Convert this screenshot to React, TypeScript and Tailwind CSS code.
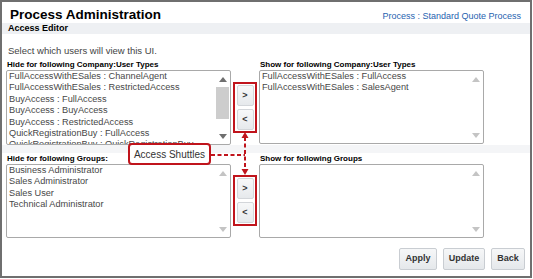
import React from "react";

const RED = "#c0141c";

const upperItems = [
  "FullAccessWithESales : ChannelAgent",
  "FullAccessWithESales : RestrictedAccess",
  "BuyAccess : FullAccess",
  "BuyAccess : BuyAccess",
  "BuyAccess : RestrictedAccess",
  "QuickRegistrationBuy : FullAccess",
  "QuickRegistrationBuy : QuickRegistrationBuy",
];

const groups = [
  "Business Administrator",
  "Sales Administrator",
  "Sales User",
  "Technical Administrator",
];

function Arrow({ down, active }: { down?: boolean; active?: boolean }) {
  return (
    <div className="h-[12px] flex items-center justify-center">
      <svg width="8" height="5" viewBox="0 0 8 5">
        <polygon
          points={down ? "0,0 8,0 4,5" : "0,5 8,5 4,0"}
          fill={active ? "#6f6f6f" : "#c4c4c4"}
        />
      </svg>
    </div>
  );
}

function ListBox({ items, tall, thumb }: { items: string[]; tall: number; thumb?: boolean }) {
  return (
    <div
      className={`w-[225px] border border-[#a9a9a9] rounded-[2px] bg-white flex overflow-hidden ${
        tall === 75 ? "h-[75px]" : "h-[74px]"
      }`}
    >
      <div className="flex-1 overflow-hidden pl-[2px] text-[9.2px] leading-[11.4px] text-[#474747] whitespace-nowrap">
        {items.map((t) => (
          <div key={t}>{t}</div>
        ))}
      </div>
      <div className="w-[15px] flex flex-col py-[2px]">
        <Arrow active={thumb} />
        <div className="flex-1 flex flex-col">
          {thumb && <div className="mt-[2px] h-[32px] mx-[1px] bg-[#cdcdcd]" />}
        </div>
        <Arrow down active={thumb} />
      </div>
    </div>
  );
}

function Shuttle({ pt }: { pt: string }) {
  return (
    <div className={`w-[28px] flex justify-center ${pt}`}>
      <div
        className="w-[24px] h-[51px] border-2 flex flex-col items-center justify-center gap-[3px]"
        style={{ borderColor: RED }}
      >
        <ShuttleButton label=">" />
        <ShuttleButton label="<" />
      </div>
    </div>
  );
}

function ShuttleButton({ label }: { label: string }) {
  return (
    <div className="w-[17px] h-[21px] rounded-[2px] border border-[#d3d6da] bg-gradient-to-b from-[#f7f8f9] to-[#e6e9ec] flex items-center justify-center text-[9px] font-bold text-[#333]">
      {label}
    </div>
  );
}

function Button({ label, w }: { label: string; w: string }) {
  return (
    <div
      className={`${w} h-[22px] rounded-[2px] border border-[#c9cdd2] bg-gradient-to-b from-[#f6f7f8] to-[#e5e8eb] flex items-center justify-center text-[9px] font-bold text-[#333]`}
    >
      {label}
    </div>
  );
}

export default function App() {
  return (
    <div className="relative w-[532px] h-[278px] border-2 border-[#6f6f6f] bg-white flex flex-col font-['Liberation_Sans',Arial,sans-serif] text-[#222]">
      {/* header */}
      <div className="h-[21px] flex items-baseline justify-between pl-[8px] pr-[9px] pt-[6px]">
        <span className="text-[13.5px] leading-[14px] font-bold text-black">Process Administration</span>
        <span className="text-[9px] leading-[10px] text-[#1f63b0]">Process : Standard Quote Process</span>
      </div>

      {/* section bar */}
      <div className="h-[11px] bg-[#eef0f3] pl-[6px] text-[9px] leading-[11px] font-bold text-black">
        Access Editor
      </div>

      <div className="mt-[11px] pl-[6px] text-[9.5px] leading-[11px] text-[#444]">
        Select which users will view this UI.
      </div>

      {/* company : user types */}
      <div className="mt-[3px] flex pl-[4px]">
        <div className="flex flex-col">
          <div className="text-[8px] leading-[11px] font-bold text-black pl-[1px]">
            Hide for following Company:User Types
          </div>
          <ListBox items={upperItems} tall={75} thumb />
        </div>
        <div className="flex flex-col">
          <div className="h-[11px]" />
          <Shuttle pt="pt-[12px]" />
        </div>
        <div className="flex flex-col">
          <div className="text-[8px] leading-[11px] font-bold text-black pl-[1px]">
            Show for following Company:User Types
          </div>
          <ListBox items={["FullAccessWithESales : FullAccess", "FullAccessWithESales : SalesAgent"]} tall={74} />
        </div>
      </div>

      <div className="h-[8px] bg-[#f4f5f7]" />

      {/* groups */}
      <div className="flex pl-[4px]">
        <div className="flex flex-col">
          <div className="text-[8px] leading-[11px] font-bold text-black pl-[1px]">
            Hide for following Groups:
          </div>
          <ListBox items={groups} tall={74} thumb={false} />
        </div>
        <div className="flex flex-col">
          <div className="h-[11px]" />
          <Shuttle pt="pt-[11px]" />
        </div>
        <div className="flex flex-col">
          <div className="text-[8px] leading-[11px] font-bold text-black pl-[1px]">
            Show for following Groups
          </div>
          <ListBox items={[]} tall={74} />
        </div>
      </div>

      {/* actions */}
      <div className="mt-[10px] flex justify-end gap-[6px] pr-[5px]">
        <Button label="Apply" w="w-[38px]" />
        <Button label="Update" w="w-[42px]" />
        <Button label="Back" w="w-[34px]" />
      </div>

      {/* callout annotation */}
      <div
        className="absolute left-[126px] top-[141px] w-[83px] h-[22px] rounded-[4px] border-2 bg-white flex items-center justify-center text-[10px] text-[#333]"
        style={{ borderColor: RED }}
      >
        Access Shuttles
      </div>
      <svg className="absolute left-[207px] top-[126px]" width="40" height="50" viewBox="0 0 40 50">
        <line x1="2" y1="27" x2="36" y2="27" stroke={RED} strokeWidth="2" strokeDasharray="4 2.5" />
        <line x1="36" y1="9" x2="36" y2="42" stroke={RED} strokeWidth="2" strokeDasharray="4 2.5" />
        <polygon points="36,4 32.5,10 39.5,10" fill={RED} />
        <polygon points="36,47 32.5,41 39.5,41" fill={RED} />
      </svg>
    </div>
  );
}
